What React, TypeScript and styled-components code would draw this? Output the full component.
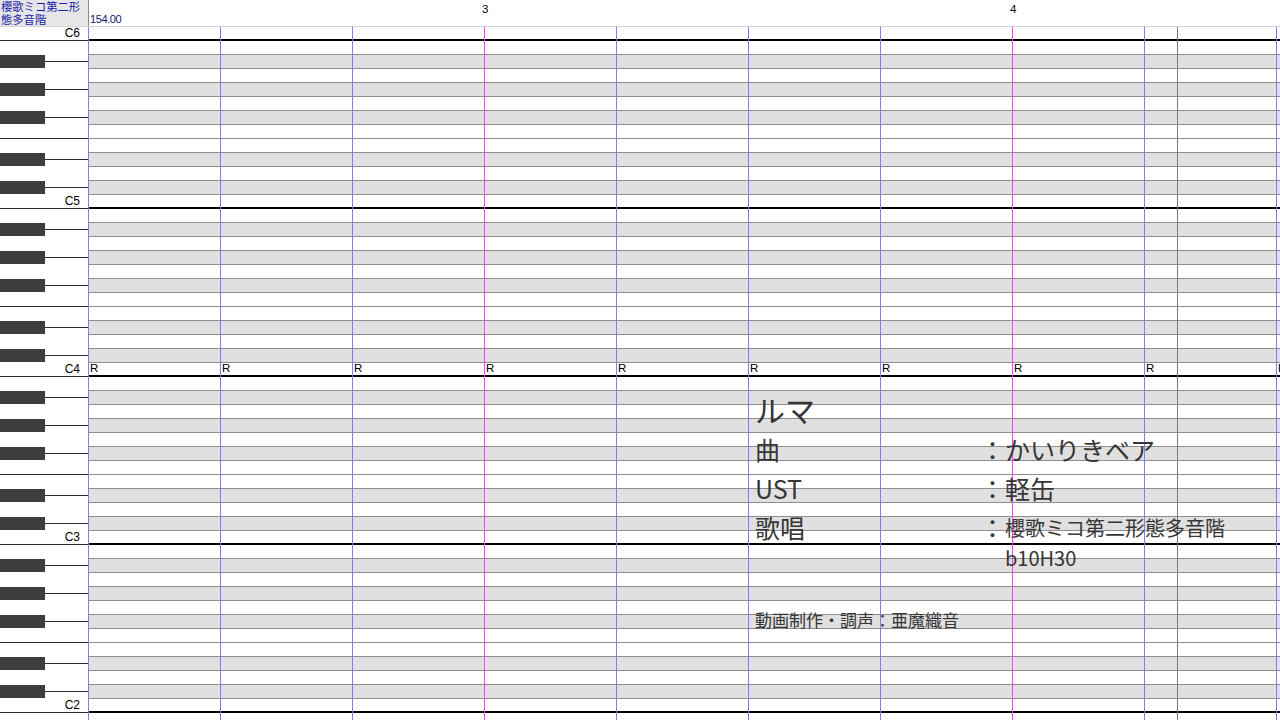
import React from "react";
import styled, { createGlobalStyle } from "styled-components";

const GlobalStyle = createGlobalStyle`
  html, body {
    margin: 0;
    padding: 0;
    background: #ffffff;
  }
`;

const ROW_HEIGHT = 14;
const BEAT_WIDTH = 132;
const NOTE_NAMES = ["B", "A#", "A", "G#", "G", "F#", "F", "E", "D#", "D", "C#", "C"];

type Key = {
  name: string;
  black: boolean;
  octaveEdge: boolean;
  fEdge: boolean;
};

const buildKeys = (): Key[] => {
  const keys: Key[] = [{ name: "C6", black: false, octaveEdge: true, fEdge: false }];
  for (let octave = 5; octave >= 2; octave--) {
    NOTE_NAMES.forEach((n) => {
      keys.push({
        name: n + octave,
        black: n.includes("#"),
        octaveEdge: n === "C",
        fEdge: n === "F",
      });
    });
  }
  keys.push({ name: "B1", black: false, octaveEdge: false, fEdge: false });
  return keys;
};

const keys = buildKeys();
const beats = Array.from({ length: 10 }, (_, i) => i);

const Window = styled.div`
  width: 1280px;
  height: 720px;
  overflow: hidden;
  display: flex;
  flex-direction: column;
  background: #fff;
  font-family: "Liberation Sans", Arial, sans-serif;
`;

const Header = styled.div`
  display: flex;
  height: 27px;
  flex-shrink: 0;
  border-bottom: 1px solid #d4d4d4;
  box-sizing: border-box;
`;

const VoiceName = styled.div`
  width: 89px;
  flex-shrink: 0;
  box-sizing: border-box;
  background: #e6e6e6;
  border-right: 1px solid #8a8a8a;
  color: #1c1ca8;
  font-family: "Noto Sans CJK JP", sans-serif;
  font-size: 11.3px;
  line-height: 12.5px;
  padding: 0 0 0 1px;
  white-space: nowrap;
  overflow: hidden;
`;

const Ruler = styled.div`
  flex: 1;
  display: flex;
  flex-direction: column;
  overflow: hidden;
`;

const MeasureRow = styled.div`
  display: flex;
  height: 14px;
`;

const BeatMark = styled.div`
  width: ${BEAT_WIDTH}px;
  flex-shrink: 0;
  font-size: 11.5px;
  line-height: 18px;
  color: #000;
  text-indent: -3px;
`;

const Tempo = styled.div`
  color: #141470;
  font-size: 11px;
  line-height: 11px;
  letter-spacing: -0.4px;
  padding-left: 1px;
`;

const Body = styled.div`
  flex: 1;
  display: flex;
  overflow: hidden;
`;

const Keyboard = styled.div`
  width: 88px;
  flex-shrink: 0;
  display: flex;
  flex-direction: column;
`;

const KeyRow = styled.div<{ $edge: boolean }>`
  height: ${ROW_HEIGHT}px;
  flex-shrink: 0;
  box-sizing: border-box;
  display: flex;
  align-items: center;
  justify-content: flex-end;
  border-bottom: 1px solid ${(p) => (p.$edge ? "#2a2a2a" : "transparent")};
`;

const BlackKey = styled.div`
  width: 45px;
  height: 100%;
  background: #3d3d3d;
  flex-shrink: 0;
`;

const KeyStub = styled.div`
  flex: 1;
  height: 1px;
  background: #2a2a2a;
`;

const KeyLabel = styled.span`
  font-size: 12px;
  line-height: 12px;
  color: #000;
  padding: 0 8px 2px 0;
`;

const Grid = styled.div`
  position: relative;
  flex: 1;
  display: flex;
  flex-direction: column;
  overflow: hidden;
`;

const NoteRow = styled.div<{ $black: boolean; $octave: boolean }>`
  height: ${ROW_HEIGHT}px;
  flex-shrink: 0;
  box-sizing: border-box;
  display: flex;
  background: ${(p) => (p.$black ? "#e0e0e0" : "#ffffff")};
  border-bottom: ${(p) => (p.$octave ? "2px solid #000" : "1px solid #8e8e8e")};
`;

const RestCell = styled.div`
  width: ${BEAT_WIDTH}px;
  flex-shrink: 0;
  font-size: 11.5px;
  line-height: 11px;
  padding-left: 2px;
  box-sizing: border-box;
  color: #000;
`;

const BeatLines = styled.div`
  position: absolute;
  inset: 0;
  display: flex;
  pointer-events: none;
`;

const BeatLine = styled.div<{ $bar: boolean }>`
  width: ${BEAT_WIDTH}px;
  flex-shrink: 0;
  box-sizing: border-box;
  border-left: 1px solid ${(p) => (p.$bar ? "#ff3cff" : "#7c7cff")};
`;

const EndLine = styled.div`
  position: absolute;
  top: 0;
  bottom: 0;
  left: 1089px;
  width: 1px;
  background: #7a7a7a;
`;

const Credits = styled.div`
  position: absolute;
  left: 667px;
  top: 362px;
  color: #363636;
  font-family: "Noto Sans CJK JP", sans-serif;
  white-space: nowrap;
`;

const SongTitle = styled.div`
  font-size: 30px;
  line-height: 41px;
`;

const CreditTable = styled.div`
  display: grid;
  grid-template-columns: 225px 25px auto;
  font-size: 25px;
  line-height: 39px;
`;

const Value = styled.div<{ $small?: boolean }>`
  font-size: ${(p) => (p.$small ? "20px" : "25px")};
  line-height: 39px;
`;

const Extra = styled.div`
  grid-column: 3;
  font-size: 20px;
  line-height: 22px;
`;

const StaffLine = styled.div`
  margin-top: 41px;
  font-size: 17px;
  line-height: 20px;
`;

const credits: [string, string, boolean][] = [
  ["曲", "かいりきベア", false],
  ["UST", "軽缶", false],
  ["歌唱", "櫻歌ミコ第二形態多音階", true],
];

const App = () => (
  <>
    <GlobalStyle />
    <Window>
      <Header>
        <VoiceName>
          櫻歌ミコ第二形
          <br />
          態多音階
        </VoiceName>
        <Ruler>
          <MeasureRow>
            {beats.map((b) => (
              <BeatMark key={b}>{b % 4 === 3 ? (b + 9) / 4 : ""}</BeatMark>
            ))}
          </MeasureRow>
          <Tempo>154.00</Tempo>
        </Ruler>
      </Header>
      <Body>
        <Keyboard>
          {keys.map((k) => (
            <KeyRow key={k.name} $edge={k.octaveEdge || k.fEdge}>
              {k.black && (
                <>
                  <BlackKey />
                  <KeyStub />
                </>
              )}
              {k.name.startsWith("C") && !k.black && <KeyLabel>{k.name}</KeyLabel>}
            </KeyRow>
          ))}
        </Keyboard>
        <Grid>
          {keys.map((k) => (
            <NoteRow key={k.name} $black={k.black} $octave={k.octaveEdge}>
              {k.name === "C4" &&
                beats.map((b) => <RestCell key={b}>R</RestCell>)}
            </NoteRow>
          ))}
          <BeatLines>
            {beats.map((b) => (
              <BeatLine key={b} $bar={b % 4 === 3} />
            ))}
          </BeatLines>
          <EndLine />
          <Credits>
            <SongTitle>ルマ</SongTitle>
            <CreditTable>
              {credits.map(([label, value, small]) => (
                <React.Fragment key={label}>
                  <div>{label}</div>
                  <div>：</div>
                  <Value $small={small}>{value}</Value>
                </React.Fragment>
              ))}
              <Extra>b10H30</Extra>
            </CreditTable>
            <StaffLine>動画制作・調声：亜魔織音</StaffLine>
          </Credits>
        </Grid>
      </Body>
    </Window>
  </>
);

export default App;
